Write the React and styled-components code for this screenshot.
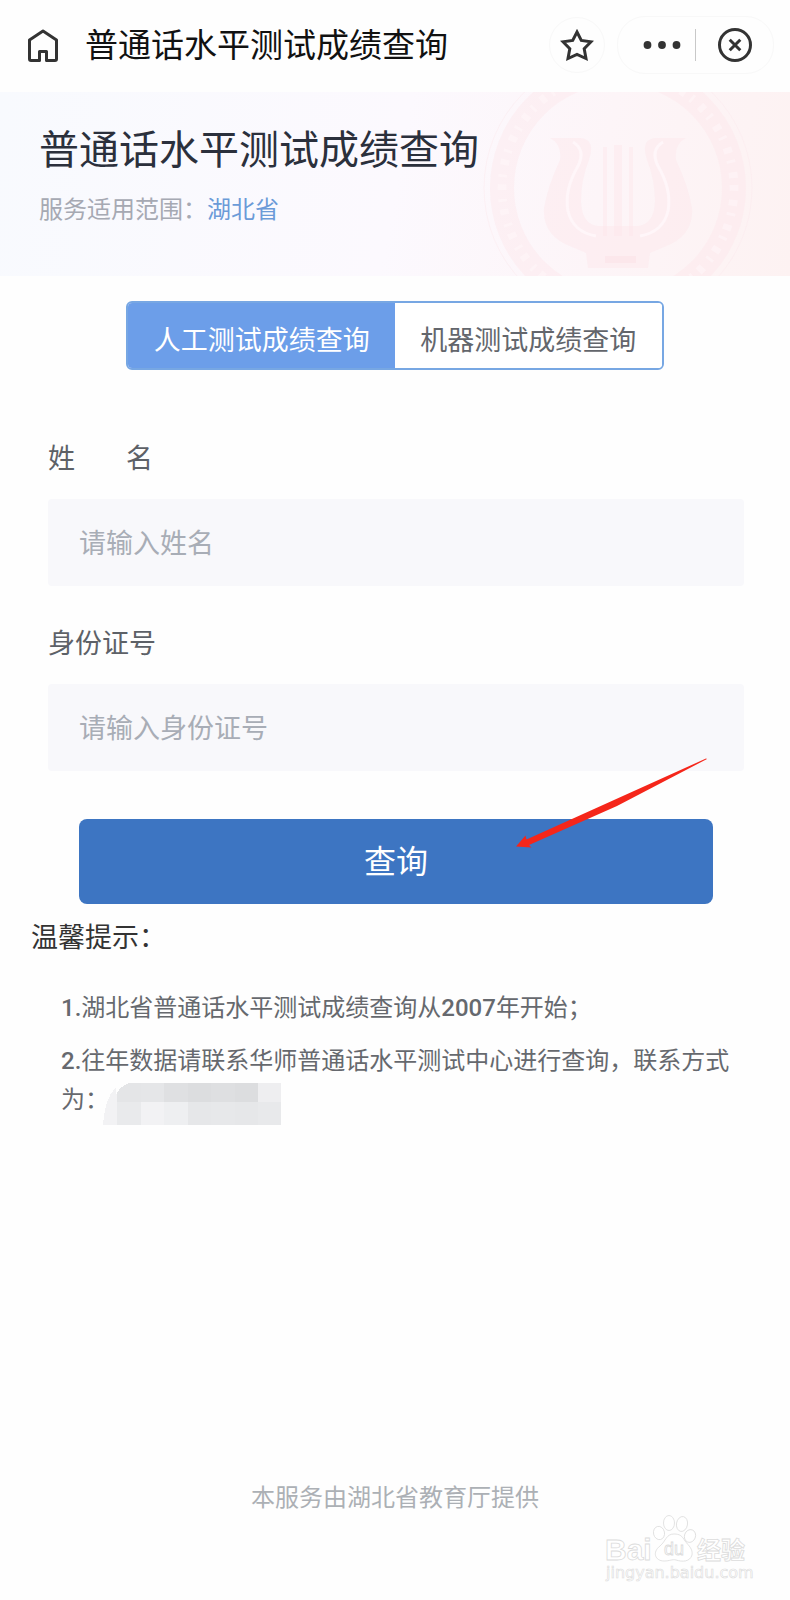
import React, { useState } from "react";
import styled, { createGlobalStyle } from "styled-components";

const GlobalStyle = createGlobalStyle`
  * {
    box-sizing: border-box;
  }

  body {
    margin: 0;
    background-color: #fefefe;
    font-family: Roboto, "Noto Sans CJK SC", sans-serif;
  }

  button,
  input {
    font-family: inherit;
  }
`;

const Wrapper = styled.div`
  position: relative;
  display: flex;
  flex-direction: column;
  min-height: 100vh;
`;

const NavBar = styled.header`
  display: flex;
  align-items: center;
  height: 92px;
  padding: 0 16px 2px 24px;
`;

const NavTitle = styled.div`
  flex: 1;
  margin-left: 23px;
  padding-top: 2px;
  color: #111;
  font-size: 33px;
  line-height: 48px;
`;

const IconButton = styled.button`
  display: flex;
  align-items: center;
  justify-content: center;
  width: ${({ $width }) => $width}px;
  height: 56px;
  padding: 0;
  border: 0;
  background: none;
`;

const StarButton = styled(IconButton)`
  margin-right: 12px;
  border: 1px solid #f8f8f8;
  border-radius: 50%;
`;

const Capsule = styled.div`
  display: flex;
  align-items: center;
  border: 1px solid #f8f8f8;
  border-radius: 28px;
`;

const MoreButton = styled(IconButton)`
  padding-left: 10px;
`;

const Divider = styled.span`
  width: 1px;
  height: 32px;
  background-color: #c8c8c8;
`;

const Banner = styled.section`
  position: relative;
  height: 184px;
  padding: 30px 39px;
  overflow: hidden;
  background: linear-gradient(100deg, #f8fafe 0%, #fcf9fe 50%, #fdf5f8 75%, #fdf2f2 100%);

  h1 {
    position: relative;
    margin: 0;
    color: #2b303c;
    font-size: 40px;
    font-weight: 400;
    line-height: 58px;
  }

  p {
    position: relative;
    margin: 13px 0 0;
    color: #a6a9b3;
    font-size: 24px;
    line-height: 34px;
  }

  a {
    color: #6b9bd8;
    text-decoration: none;
  }
`;

const Emblem = styled.svg`
  position: absolute;
  top: -40px;
  right: 36px;
`;

const Tabs = styled.div`
  display: flex;
  align-self: center;
  width: 68%;
  height: 69px;
  margin-top: 25px;
  overflow: hidden;
  border: 2px solid #77a7e3;
  border-radius: 6px;
`;

const Tab = styled.button`
  flex: 1;
  padding: 6px 0 0;
  border: 0;
  background-color: ${({ $active }) => ($active ? "#6c9ee9" : "#fff")};
  color: ${({ $active }) => ($active ? "#fff" : "#63666c")};
  font-size: 27px;
  white-space: nowrap;
`;

const Form = styled.form`
  display: flex;
  flex-direction: column;
  margin-top: 69px;
  padding: 0 46px 0 48px;
`;

const Field = styled.div`
  margin-bottom: 38px;
`;

const Label = styled.label`
  display: flex;
  gap: 51px;
  margin-bottom: 20px;
  color: #5d6167;
  font-size: 27px;
  line-height: 40px;
`;

const TextInput = styled.input`
  display: block;
  width: 100%;
  height: 87px;
  padding: 2px 31px 0;
  border: 0;
  border-radius: 4px;
  outline: 0;
  background-color: #f8f8fb;
  color: #333;
  font-size: 27px;

  &::placeholder {
    color: #a8adb6;
    opacity: 1;
  }
`;

const SubmitRow = styled.div`
  position: relative;
  display: flex;
  flex-direction: column;
  margin-top: 10px;
`;

const SubmitButton = styled.button`
  height: 85px;
  margin: 0 31px;
  padding: 0 0 5px;
  border: 0;
  border-radius: 8px;
  background-color: #3d75c2;
  color: #fff;
  font-size: 32px;
`;

const Arrow = styled.svg`
  position: absolute;
  top: -62px;
  right: 36px;
  pointer-events: none;
`;

const Tips = styled.section`
  padding: 14px 31px 0;

  h2 {
    margin: 0;
    color: #333;
    font-size: 27px;
    font-weight: 400;
    line-height: 40px;
  }
`;

const TipList = styled.div`
  margin-top: 31px;
  padding: 0 17px 0 30px;
  color: #66696e;
  font-size: 24px;
  line-height: 39px;

  p {
    margin: 0 0 14px;
  }

  b {
    font-weight: 500;
  }
`;

const Mosaic = styled.svg`
  margin: 2px 0 0 -6px;
  vertical-align: top;
`;

const Footer = styled.footer`
  margin-top: auto;
  padding-bottom: 84px;
  color: #acb0b5;
  font-size: 24px;
  line-height: 36px;
  text-align: center;
`;

const Watermark = styled.svg`
  position: absolute;
  right: 36px;
  bottom: 14px;
`;

const MOSAIC_TOP = ["#e4e5e7", "#e5e6e8", "#dfe0e2", "#dcdddf", "#dedfe1", "#dcdddf", "#eeeef0"];
const MOSAIC_BOTTOM = ["#e9eaec", "#f2f2f4", "#eeeff1", "#e6e7e9", "#e7e8ea", "#e6e7e9", "#e8e9eb"];

const HomeIcon = () => (
  <svg width="38" height="38" viewBox="0 0 38 38" fill="none" stroke="#333" strokeWidth="3" strokeLinejoin="round">
    <path d="M15.500 34.500H7Q5.500 34.500 5.500 33V14L19 5L32.500 14V33Q32.500 34.500 31 34.500H22.500V25.500H15.500Z" />
  </svg>
);

const StarIcon = () => (
  <svg width="34" height="34" viewBox="0 0 34 34" fill="none" stroke="#333" strokeWidth="3">
    <path d="M17 4L21.300 12.400L31 13.800L24.200 20.800L26 30.500L17 26.500L8 30.500L9.800 20.800L3 13.800L12.700 12.400Z" />
  </svg>
);

const MoreIcon = () => (
  <svg width="38" height="10" viewBox="0 0 38 10" fill="#333">
    <circle cx="4.500" cy="5" r="3.900" />
    <circle cx="19" cy="5" r="3.900" />
    <circle cx="33.500" cy="5" r="3.900" />
  </svg>
);

const CloseIcon = () => (
  <svg width="36" height="36" viewBox="0 0 36 36" fill="none" stroke="#333" strokeWidth="3">
    <circle cx="18" cy="18" r="15.500" />
    <path d="M12.700 12.700L23.300 23.300M23.300 12.700L12.700 23.300" />
  </svg>
);

const LyreEmblem = () => (
  <Emblem width="272" height="272" viewBox="0 0 272 272" fill="none" aria-hidden="true">
    <circle cx="136" cy="136" r="134" stroke="#fbe9ed" strokeOpacity="0.5" />
    <circle cx="136" cy="136" r="116" stroke="#fde6eb" strokeOpacity="0.45" strokeWidth="24" />
    <circle cx="136" cy="136" r="116" stroke="#fff8fa" strokeOpacity="0.5" strokeWidth="9" strokeDasharray="3 9 6 7" />
    <g fill="#fde4e9" fillOpacity="0.42">
      <path d="M68 86H98Q114 87 107 108Q99 128 99 150Q100 172 116 174H156Q172 172 173 150Q173 128 165 108Q158 87 174 86H204Q192 92 194 108Q206 133 210 156Q212 184 182 195L168 201L166 216H106L104 201L90 195Q60 184 62 156Q66 133 78 108Q80 92 68 86Z" />
      <path d="M121 95H125V184H121ZM132 93H140V184H132ZM147 95H151V184H147Z" />
    </g>
    <path d="M91 90Q104 98 96 114Q82 138 86 159Q91 180 114 184M181 90Q168 98 176 114Q190 138 186 159Q181 180 158 184" stroke="#fff6f9" strokeWidth="3" />
    <path d="M123 204H154V211H123Z" fill="#fbdce3" fillOpacity="0.4" />
  </Emblem>
);

const BaiduMark = () => (
  <Watermark width="150" height="72" viewBox="0 0 150 72" fill="#fff" stroke="#dcdcdc" strokeWidth="0.8">
    <g fontFamily='"Liberation Sans", "Noto Sans CJK SC", sans-serif'>
      <text x="1" y="46" fontSize="30" fontWeight="700">Bai</text>
      <ellipse cx="55" cy="19" rx="5.500" ry="6.700" transform="rotate(-12 55 19)" />
      <ellipse cx="65" cy="9" rx="5.500" ry="7.500" />
      <ellipse cx="78" cy="10" rx="5.500" ry="7.500" transform="rotate(10 78 10)" />
      <ellipse cx="86" cy="22" rx="5.500" ry="6.500" transform="rotate(20 86 22)" />
      <path d="M70 20C62 20 62 27 56 32C48 38 51 47 60 47C66 47 68 45 72 46C78 48 86 48 88 41C89 35 85 32 81 27C78 22 76 20 70 20Z" />
      <text x="60" y="41" fontSize="18">du</text>
      <text x="93" y="45" fontSize="24" fontWeight="700">经验</text>
    </g>
    <text x="2" y="64" fontSize="16" fontFamily='"DejaVu Sans", sans-serif' strokeWidth="0.600">
      jingyan.baidu.com
    </text>
  </Watermark>
);

const App = () => {
  const [tab, setTab] = useState("manual");

  return (
    <Wrapper>
      <GlobalStyle />

      <NavBar>
        <IconButton type="button" $width={38} aria-label="首页">
          <HomeIcon />
        </IconButton>
        <NavTitle>普通话水平测试成绩查询</NavTitle>
        <StarButton type="button" $width={56} aria-label="收藏">
          <StarIcon />
        </StarButton>
        <Capsule>
          <MoreButton type="button" $width={77} aria-label="更多">
            <MoreIcon />
          </MoreButton>
          <Divider />
          <IconButton type="button" $width={77} aria-label="关闭">
            <CloseIcon />
          </IconButton>
        </Capsule>
      </NavBar>

      <Banner>
        <LyreEmblem />
        <h1>普通话水平测试成绩查询</h1>
        <p>
          服务适用范围：<a href="#region">湖北省</a>
        </p>
      </Banner>

      <Tabs role="tablist">
        <Tab
          type="button"
          role="tab"
          aria-selected={tab === "manual"}
          $active={tab === "manual"}
          onClick={() => setTab("manual")}
        >
          人工测试成绩查询
        </Tab>
        <Tab
          type="button"
          role="tab"
          aria-selected={tab === "machine"}
          $active={tab === "machine"}
          onClick={() => setTab("machine")}
        >
          机器测试成绩查询
        </Tab>
      </Tabs>

      <Form onSubmit={(e) => e.preventDefault()}>
        <Field>
          <Label htmlFor="name">
            <span>姓</span>
            <span>名</span>
          </Label>
          <TextInput id="name" type="text" placeholder="请输入姓名" />
        </Field>
        <Field>
          <Label htmlFor="idCard">身份证号</Label>
          <TextInput id="idCard" type="text" placeholder="请输入身份证号" />
        </Field>
        <SubmitRow>
          <SubmitButton type="submit">查询</SubmitButton>
          <Arrow width="194" height="94" viewBox="0 0 194 94" fill="#f5261a" aria-hidden="true">
            <path d="M193 2L103 49L15 88L17.500 90.500L2 89.500L11.500 78.500L12.500 82.500L100 43L192 1.500Z" />
          </Arrow>
        </SubmitRow>
      </Form>

      <Tips>
        <h2>温馨提示：</h2>
        <TipList>
          <p>
            <b>1.</b>湖北省普通话水平测试成绩查询从<b>2007</b>年开始；
          </p>
          <p>
            <b>2.</b>往年数据请联系华师普通话水平测试中心进行查询，联系方式为：
            <Mosaic width="178" height="42" viewBox="0 0 178 42" shapeRendering="crispEdges" aria-hidden="true">
              <path d="M0 42Q3 2 24 0V42Z" fill="#f2f2f4" />
              {MOSAIC_TOP.map((fill, i) => (
                <rect key={i} x={14 + i * 23.5} width="23.5" height="19" fill={fill} />
              ))}
              {MOSAIC_BOTTOM.map((fill, i) => (
                <rect key={i} x={14 + i * 23.5} y="19" width="23.5" height="23" fill={fill} />
              ))}
              <path d="M13 0H26Q16 4 13 12Z" fill="#fefefe" />
            </Mosaic>
          </p>
        </TipList>
      </Tips>

      <Footer>本服务由湖北省教育厅提供</Footer>

      <BaiduMark />
    </Wrapper>
  );
};

export default App;
